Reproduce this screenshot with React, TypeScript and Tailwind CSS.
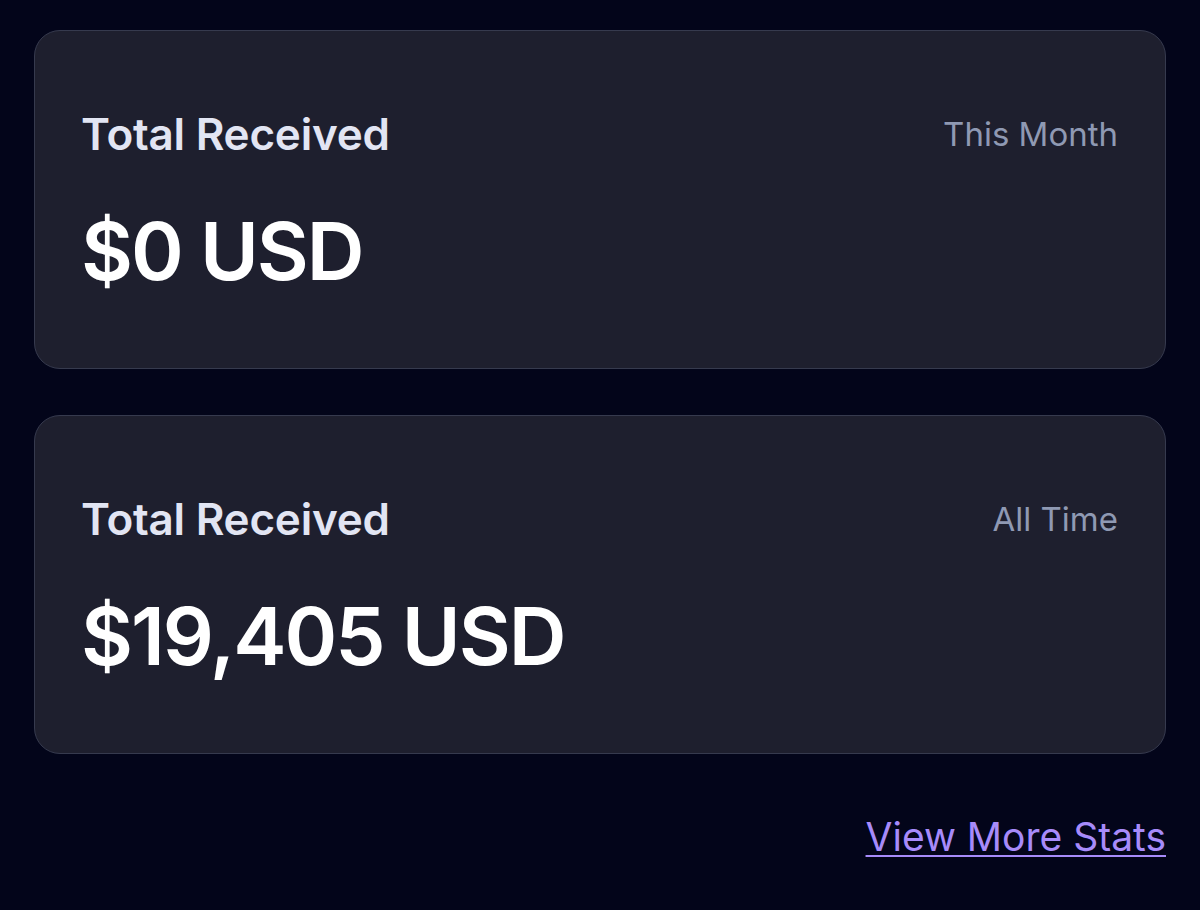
import React from "react";

function StatCard({ label, period, value }: { label: string; period: string; value: string }) {
  return (
    <div className="flex flex-col rounded-[26px] border border-[#363a4e] bg-[#1e1f2e] pl-[46px] pr-[47px] pt-[81px] pb-[77px]">
      <div className="flex items-center justify-between">
        <span className="text-[44px] leading-none font-semibold tracking-[-0.005em] text-[#e2e5f3]">{label}</span>
        <span className="text-[33px] leading-none font-normal text-[#8f99b3]">{period}</span>
      </div>
      <div className="mt-[55px] text-[80px] leading-none font-semibold tracking-[-0.025em] text-white">{value}</div>
    </div>
  );
}

export default function App() {
  return (
    <div
      className="min-h-[910px] w-full bg-[#03051a] px-[34px] pt-[30px]"
      style={{ fontFamily: "Inter, 'Noto Sans', sans-serif" }}
    >
      <div className="flex flex-col gap-[46px]">
        <StatCard label="Total Received" period="This Month" value="$0 USD" />
        <StatCard label="Total Received" period="All Time" value="$19,405 USD" />
      </div>
      <div className="mt-[63px] flex justify-end">
        <a
          href="#"
          className="text-[39px] leading-none text-[#a78bfa] underline decoration-2 underline-offset-[4px]"
        >
          View More Stats
        </a>
      </div>
    </div>
  );
}
